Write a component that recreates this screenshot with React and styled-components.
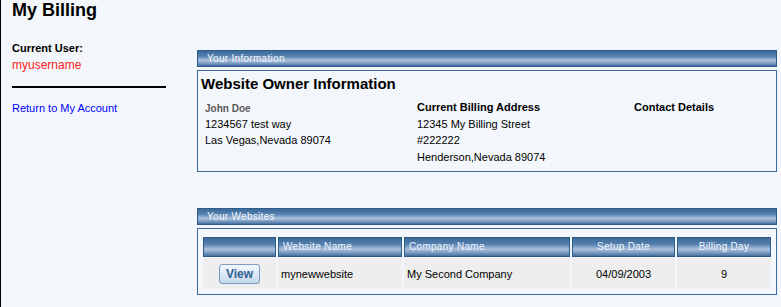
import { Fragment } from "react"
import styled, { createGlobalStyle } from "styled-components"

const GlobalStyle = createGlobalStyle`
	html, body {
		margin: 0;
		padding: 0;
		background: #f3f7fb;
	}
	body {
		font-family: "Liberation Sans", Arial, sans-serif;
		color: #000;
	}
`

const Page = styled.div`
	min-height: 307px;
	box-sizing: border-box;
	border-left: 1px solid #000;
`

const PageTitle = styled.h1`
	margin: 0;
	padding-left: 11px;
	font-size: 18px;
	line-height: 20px;
	font-weight: bold;
`

const Columns = styled.div`
	display: flex;
`

const Sidebar = styled.div`
	width: 196px;
	flex-shrink: 0;
	box-sizing: border-box;
	padding: 22px 0 0 11px;
`

const Label = styled.div`
	font-size: 11px;
	line-height: 13px;
	font-weight: bold;
`

const UserName = styled.div`
	margin-top: 3px;
	font-size: 12px;
	line-height: 14px;
	color: #ff2222;
`

const Rule = styled.hr`
	width: 154px;
	height: 2px;
	margin: 14px 0 0;
	border: none;
	background: #000;
`

const SideLink = styled.a`
	display: block;
	margin-top: 14px;
	font-size: 11px;
	line-height: 13px;
	color: #0000ff;
	text-decoration: none;
`

const Main = styled.div`
	flex: 1;
	margin: 30px 4px 0 0;
`

const Panel = styled.section`
	margin-bottom: ${(p) => p.$gap || 0}px;
`

const PanelBar = styled.div`
	height: 15px;
	border: 1px solid #2e5d8c;
	padding-left: 9px;
	background: linear-gradient(
		to bottom,
		#3d6998 0%,
		#5581b0 35%,
		#abc1dd 62%,
		#7b9bc2 82%,
		#426e9d 100%
	);
	color: #f2f6fb;
	font-size: 10px;
	line-height: 16px;
	letter-spacing: 0.3px;
`

const PanelBox = styled.div`
	margin-top: 3px;
	border: 1px solid #3a6b9c;
	padding: ${(p) => p.$pad};
`

const BoxTitle = styled.h2`
	margin: 0;
	font-size: 15px;
	line-height: 18px;
	font-weight: bold;
`

const InfoGrid = styled.div`
	display: grid;
	grid-template-columns: 212px 217px 1fr;
	margin: 6px 0 0 4px;
	font-size: 11px;
	line-height: 16.5px;
`

const InfoHead = styled.div`
	font-weight: bold;
`

const OwnerName = styled.div`
	padding-top: 2px;
	margin-bottom: -2px;
	font-size: 10px;
	font-weight: bold;
	color: #5a5a5a;
`

const SiteGrid = styled.div`
	display: grid;
	grid-template-columns: 73px 124px 166px 103px 1fr;
	gap: 1px 2px;
`

const HeadCell = styled.div`
	height: 18px;
	border: 1px solid #2e5d8c;
	padding: 0 4px;
	background: linear-gradient(
		to bottom,
		#3d6998 0%,
		#5581b0 35%,
		#abc1dd 62%,
		#7b9bc2 82%,
		#426e9d 100%
	);
	color: #f2f6fb;
	font-size: 10px;
	line-height: 18px;
	letter-spacing: 0.3px;
	text-align: ${(p) => (p.$center ? "center" : "left")};
`

const Cell = styled.div`
	height: 31px;
	display: flex;
	align-items: center;
	justify-content: ${(p) => (p.$center ? "center" : "flex-start")};
	padding: 0 3px;
	background: #eeeeee;
	font-size: 11px;
`

const ViewButton = styled.button`
	width: 41px;
	height: 20px;
	padding: 0;
	border: 1px solid #7b9cc2;
	border-radius: 3px;
	background: linear-gradient(to bottom, #f3f8fd 0%, #dbe7f4 55%, #c4d6ea 100%);
	color: #2f5f8f;
	font-family: "Liberation Sans", Arial, sans-serif;
	font-size: 12px;
	font-weight: bold;
	cursor: pointer;
`

const websites = [
	{ name: "mynewwebsite", company: "My Second Company", setup: "04/09/2003", day: "9" },
]

export default function App() {
	return (
		<>
			<GlobalStyle />
			<Page>
				<PageTitle>My Billing</PageTitle>
				<Columns>
					<Sidebar>
						<Label>Current User:</Label>
						<UserName>myusername</UserName>
						<Rule />
						<SideLink href="#">Return to My Account</SideLink>
					</Sidebar>
					<Main>
						<Panel $gap={36}>
							<PanelBar>Your Information</PanelBar>
							<PanelBox $pad="4px 3px 6px">
								<BoxTitle>Website Owner Information</BoxTitle>
								<InfoGrid>
									<div>
										<OwnerName>John Doe</OwnerName>
										<div>1234567 test way</div>
										<div>Las Vegas,Nevada 89074</div>
									</div>
									<div>
										<InfoHead>Current Billing Address</InfoHead>
										<div>12345 My Billing Street</div>
										<div>#222222</div>
										<div>Henderson,Nevada 89074</div>
									</div>
									<div>
										<InfoHead>Contact Details</InfoHead>
									</div>
								</InfoGrid>
							</PanelBox>
						</Panel>
						<Panel>
							<PanelBar>Your Websites</PanelBar>
							<PanelBox $pad="8px 5px 5px">
								<SiteGrid>
									<HeadCell />
									<HeadCell>Website Name</HeadCell>
									<HeadCell>Company Name</HeadCell>
									<HeadCell $center>Setup Date</HeadCell>
									<HeadCell $center>Billing Day</HeadCell>
									{websites.map((site) => (
										<Fragment key={site.name}>
											<Cell $center>
												<ViewButton>View</ViewButton>
											</Cell>
											<Cell>{site.name}</Cell>
											<Cell>{site.company}</Cell>
											<Cell $center>{site.setup}</Cell>
											<Cell $center>{site.day}</Cell>
										</Fragment>
									))}
								</SiteGrid>
							</PanelBox>
						</Panel>
					</Main>
				</Columns>
			</Page>
		</>
	)
}
